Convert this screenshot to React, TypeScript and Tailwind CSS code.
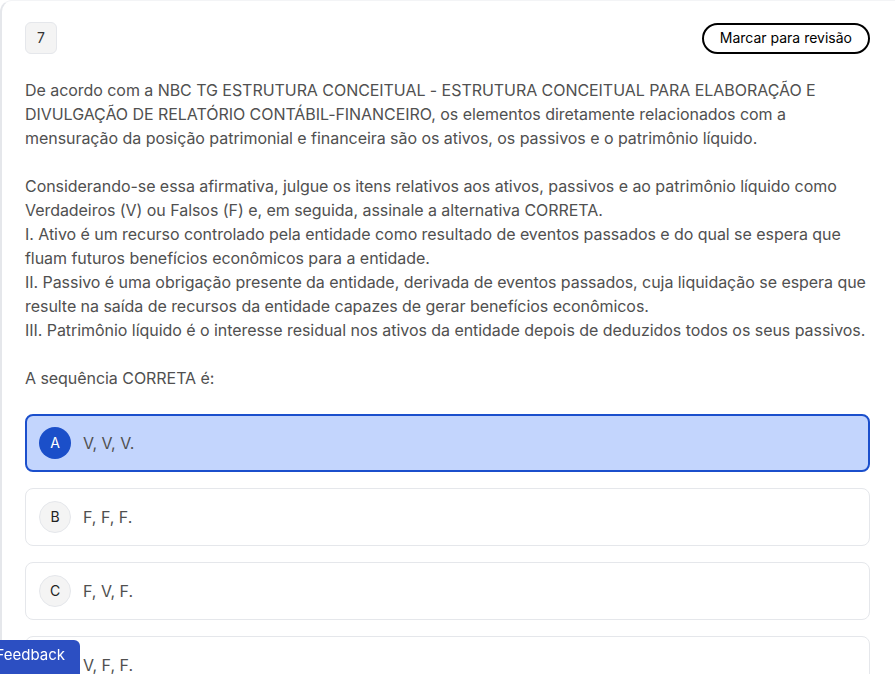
import React from 'react';

const options = [
  { letter: 'A', text: 'V, V, V.', selected: true },
  { letter: 'B', text: 'F, F, F.', selected: false },
  { letter: 'C', text: 'F, V, F.', selected: false },
  { letter: 'D', text: 'V, F, F.', selected: false },
];

export default function App() {
  return (
    <div className="h-[674px] overflow-hidden bg-white font-['Inter',sans-serif]">
      <div className="min-h-[700px] rounded-tl-xl border-l-2 border-t border-l-gray-200 border-t-gray-100 pl-[23px] pr-[25px] pt-[21px]">
        {/* Header */}
        <div className="flex items-center justify-between">
          <div className="flex h-8 w-8 items-center justify-center rounded-md border border-gray-200 bg-[#f4f4f4] text-sm text-[#333]">
            7
          </div>
          <button className="h-[31px] rounded-full border-2 border-black px-4 text-sm text-black">
            Marcar para revisão
          </button>
        </div>

        {/* Question */}
        <div className="mt-6 text-[16px] leading-6 tracking-[-0.05px] text-[#505050]">
          <p>
            De acordo com a NBC TG ESTRUTURA CONCEITUAL - ESTRUTURA CONCEITUAL PARA ELABORAÇÃO E DIVULGAÇÃO DE
            RELATÓRIO CONTÁBIL-FINANCEIRO, os elementos diretamente relacionados com a mensuração da posição
            patrimonial e financeira são os ativos, os passivos e o patrimônio líquido.
          </p>
          <p className="mt-6">
            Considerando-se essa afirmativa, julgue os itens relativos aos ativos, passivos e ao patrimônio líquido como
            Verdadeiros (V) ou Falsos (F) e, em seguida, assinale a alternativa CORRETA.
            <br />
            I. Ativo é um recurso controlado pela entidade como resultado de eventos passados e do qual se espera que
            fluam futuros benefícios econômicos para a entidade.
            <br />
            II. Passivo é uma obrigação presente da entidade, derivada de eventos passados, cuja liquidação se espera que
            resulte na saída de recursos da entidade capazes de gerar benefícios econômicos.
            <br />
            III. Patrimônio líquido é o interesse residual nos ativos da entidade depois de deduzidos todos os seus
            passivos.
          </p>
          <p className="mt-6">A sequência CORRETA é:</p>
        </div>

        {/* Options */}
        <div className="mt-6 flex flex-col gap-4">
          {options.map((o) =>
            o.selected ? (
              <div
                key={o.letter}
                className="flex h-[58px] items-center gap-3 rounded-lg border-2 border-[#1b4fcc] bg-[#c3d5fd] px-3"
              >
                <span className="flex h-8 w-8 items-center justify-center rounded-full bg-[#1b4fc9] text-sm text-white">
                  {o.letter}
                </span>
                <span className="text-base text-[#505050]">{o.text}</span>
              </div>
            ) : (
              <div
                key={o.letter}
                className="flex h-[58px] items-center gap-3 rounded-lg border border-gray-200 bg-white px-[13px]"
              >
                <span className="flex h-8 w-8 items-center justify-center rounded-full border border-gray-200 bg-[#f4f4f4] text-sm text-[#222]">
                  {o.letter}
                </span>
                <span className="text-base text-[#505050]">{o.text}</span>
              </div>
            )
          )}
        </div>
      </div>

      {/* Feedback tab */}
      <button className="fixed bottom-0 left-0 flex h-[34px] w-20 items-center justify-end rounded-tr-md bg-[#2c4fc2] pb-1 pr-[15px] text-[15px] text-white">
        Feedback
      </button>
    </div>
  );
}
